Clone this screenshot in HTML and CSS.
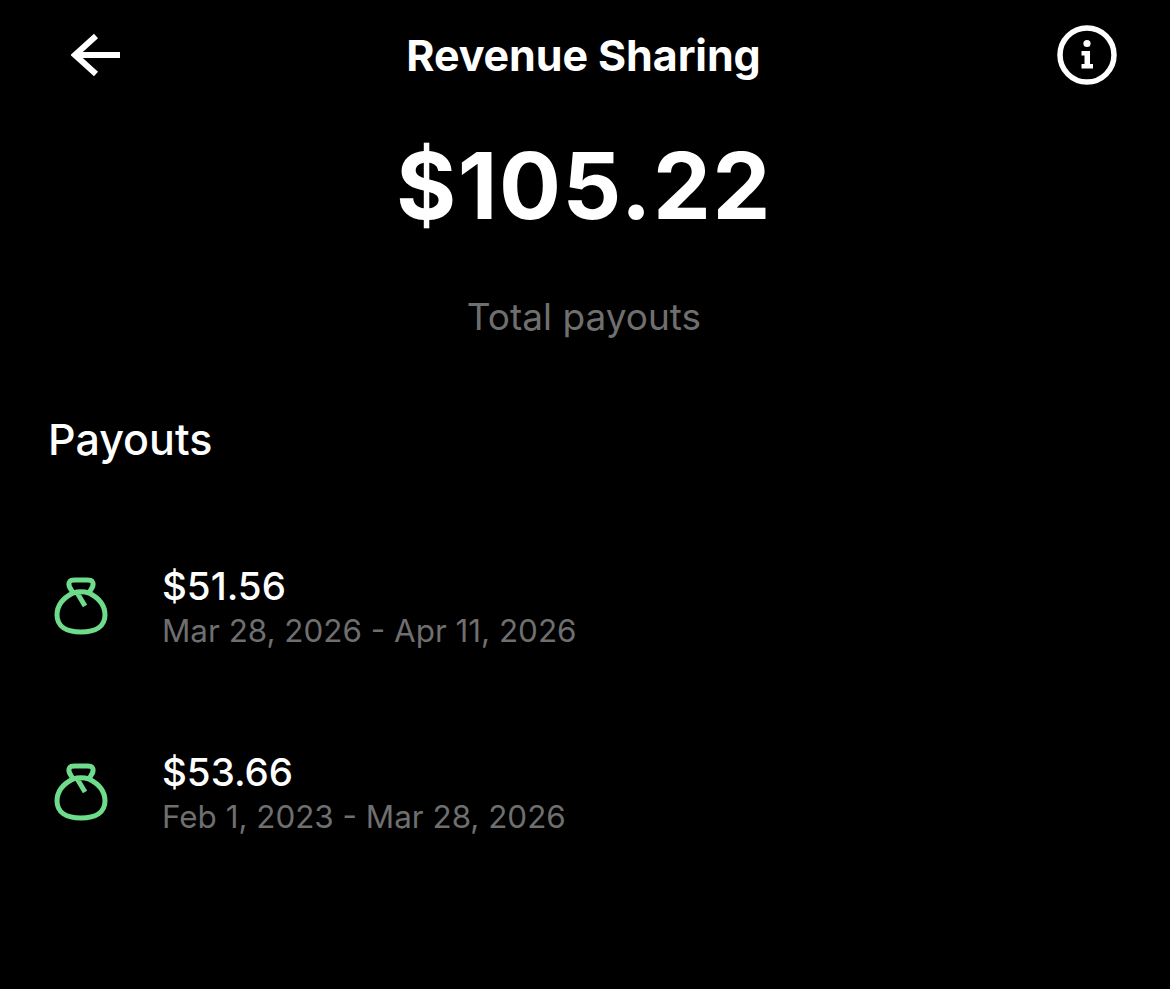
FILE: index.html
```html
<!DOCTYPE html>
<html>
<head>
    <meta charset="utf-8" />
    <title>Revenue Sharing</title>
    <link rel="stylesheet" href="styles.css">
</head>
<body>
<div class="top_bar">
    <svg class="icon_back" width="50" height="44" viewBox="0 0 50 44">
        <path d="M25 3 L4 22 L25 41 M4 22 H49" fill="none" stroke="#fff" stroke-width="6"/>
    </svg>
    <div class="top_title">Revenue Sharing</div>
    <svg class="icon_info" width="60" height="60" viewBox="0 0 60 60">
        <circle cx="30" cy="30" r="27" fill="none" stroke="#fff" stroke-width="5.5"/>
        <circle cx="30" cy="18.5" r="3.6" fill="#fff"/>
        <path d="M24.5 26 H33 V39 H36 V43.5 H24.5 V39 H27.5 V30.5 H24.5 Z" fill="#fff"/>
    </svg>
</div>
<div class="total">
    <div class="total_num">$105.22</div>
    <div class="total_label">Total payouts</div>
</div>
<div class="section_title">Payouts</div>
<div class="pay_list">
    <div class="pay_row">
        <svg class="icon_bag" width="54" height="58" viewBox="0 0 54 58">
            <path d="M19 16 C9 21 3 29 3 38 C3 49 12 55 27 55 C42 55 51 49 51 38 C51 29 45 21 35 16 C36 13 40 10 39 6 C38 3 36 3 33 3 H21 C18 3 16 3 15 6 C14 10 18 13 19 16 C24 14.500 30 14.500 35 16 M23 15.500 L31 29" fill="none" stroke="#6fdc8c" stroke-width="5" stroke-linejoin="round"/>
        </svg>
        <div class="pay_text">
            <div class="pay_num">$51.56</div>
            <div class="pay_date">Mar 28, 2026 - Apr 11, 2026</div>
        </div>
    </div>
    <div class="pay_row">
        <svg class="icon_bag" width="54" height="58" viewBox="0 0 54 58">
            <path d="M19 16 C9 21 3 29 3 38 C3 49 12 55 27 55 C42 55 51 49 51 38 C51 29 45 21 35 16 C36 13 40 10 39 6 C38 3 36 3 33 3 H21 C18 3 16 3 15 6 C14 10 18 13 19 16 C24 14.500 30 14.500 35 16 M23 15.500 L31 29" fill="none" stroke="#6fdc8c" stroke-width="5" stroke-linejoin="round"/>
        </svg>
        <div class="pay_text">
            <div class="pay_num">$53.66</div>
            <div class="pay_date">Feb 1, 2023 - Mar 28, 2026</div>
        </div>
    </div>
</div>
</body>
</html>
```

FILE: styles.css
```css
*{margin:0;padding:0;box-sizing:border-box;}
html,body{height:100%;}
body{background:#000;color:#fff;font-family:Inter,"Liberation Sans",sans-serif;overflow:hidden;}
.top_bar{
    display:grid;
    grid-template-columns:1fr auto 1fr;
    align-items:center;
    height:60px;
    margin-top:25px;
    padding:0 53px 0 50px;
}
.icon_back{margin-left:21px;}
.icon_info{justify-self:end;}
.top_title{font-size:43px;font-weight:700;line-height:60px;letter-spacing:-.1px;}
.total{text-align:center;padding-right:2px;}
.total_num{font-size:92px;font-weight:700;line-height:116px;margin-top:43px;letter-spacing:1.5px;}
.total_label{font-size:37px;line-height:44px;color:#6f6f6f;margin-top:51px;}
.section_title{font-size:43px;font-weight:500;line-height:48px;margin:76px 0 0 48px;}
.pay_list{display:flex;flex-direction:column;gap:90px;margin-top:95px;padding-left:54px;}
.pay_row{display:flex;align-items:center;gap:54px;height:96px;}
.pay_text{padding-top:3px;}
.pay_num{font-size:38.5px;font-weight:500;line-height:46px;}
.pay_date{font-size:31.4px;line-height:42px;color:#6f6f6f;margin-top:1px;}
```
